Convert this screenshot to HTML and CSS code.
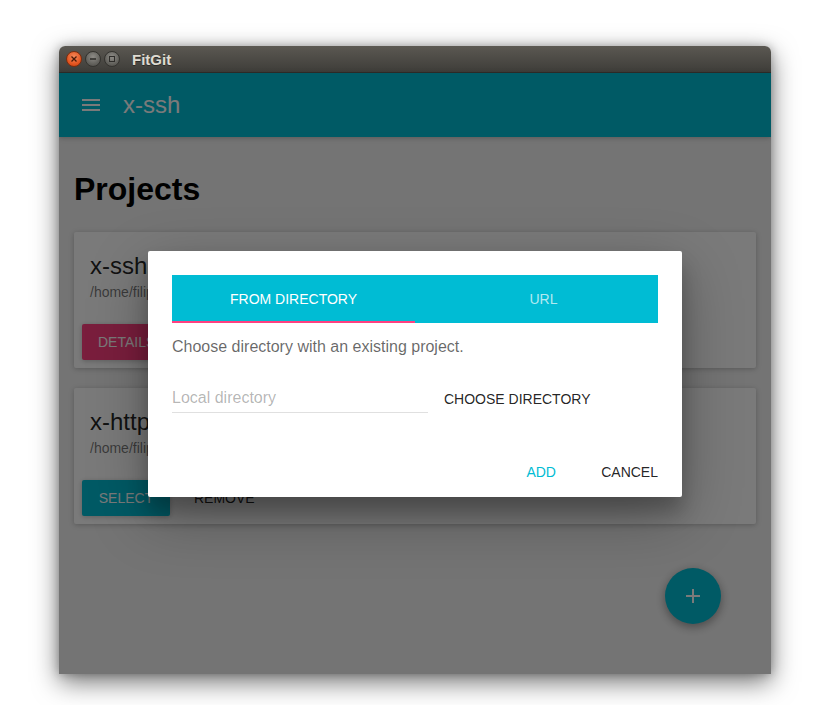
FILE: index.html
```html
<!DOCTYPE html>
<html>
<head>
<meta charset="utf-8">
<title>FitGit</title>
<link rel="stylesheet" href="styles.css">
</head>
<body>
<div class="window">
  <div class="titlebar">
    <div class="wbtns">
      <span class="wbtn close"><svg width="8" height="8" viewBox="0 0 8 8"><path d="M1.5 1.5L6.5 6.5M6.5 1.5L1.5 6.5" stroke="#4a1a08" stroke-width="1.3"/></svg></span>
      <span class="wbtn"><svg width="8" height="8" viewBox="0 0 8 8"><path d="M1 4H7" stroke="#2e2d2a" stroke-width="1.3"/></svg></span>
      <span class="wbtn"><svg width="8" height="8" viewBox="0 0 8 8"><rect x="1.5" y="1.5" width="5" height="5" fill="none" stroke="#2e2d2a" stroke-width="1"/></svg></span>
    </div>
    <span class="wtitle">FitGit</span>
  </div>
  <div class="app">
    <header class="appbar">
      <span class="iconbtn">
        <svg width="24" height="24" viewBox="0 0 24 24"><path d="M3 18h18v-2H3v2zm0-5h18v-2H3v2zm0-7v2h18V6H3z" fill="#fff"/></svg>
      </span>
      <h2 class="apptitle">x-ssh</h2>
    </header>
    <main class="content">
      <h1 class="heading">Projects</h1>
      <div class="cards">
        <section class="card">
          <div class="cardtitle">
            <span class="ctitle">x-ssh</span>
            <span class="csub">/home/filip/projects/x-ssh</span>
          </div>
          <div class="cardactions">
            <span class="rbtn pink">DETAILS</span>
          </div>
        </section>
        <section class="card">
          <div class="cardtitle">
            <span class="ctitle">x-http</span>
            <span class="csub">/home/filip/projects/x-http</span>
          </div>
          <div class="cardactions">
            <span class="rbtn cyan">SELECT</span>
            <span class="fbtn">REMOVE</span>
          </div>
        </section>
      </div>
    </main>
    <span class="fab"><svg width="24" height="24" viewBox="0 0 24 24"><path d="M19 13h-6v6h-2v-6H5v-2h6V5h2v6h6v2z" fill="#fff"/></svg></span>
    <div class="overlay">
      <div class="dialog">
        <div class="dbody">
          <div class="tabs">
            <div class="tab active"><span>FROM DIRECTORY</span></div>
            <div class="tab second"><span>URL</span></div>
            <div class="ink"></div>
          </div>
          <p class="desc">Choose directory with an existing project.</p>
          <div class="fieldrow">
            <div class="textfield">
              <span class="hint">Local directory</span>
            </div>
            <span class="fbtn dark choose">CHOOSE DIRECTORY</span>
          </div>
        </div>
        <div class="dactions">
          <span class="fbtn accent">ADD</span>
          <span class="fbtn dark">CANCEL</span>
        </div>
      </div>
    </div>
  </div>
</div>
</body>
</html>
```
FILE: styles.css
```css
* { box-sizing: border-box; }
html, body { margin: 0; }
body {
  background: #ffffff;
  padding: 46px 0 0 59px;
  font-family: "Liberation Sans", Arial, sans-serif;
  height: 705px;
  overflow: hidden;
}
.window {
  width: 712px;
  height: 628px;
  display: flex;
  flex-direction: column;
  border-radius: 6px 6px 0 0;
  box-shadow: 0 8px 26px rgba(0,0,0,0.55), 0 0 10px rgba(0,0,0,0.25);
  overflow: hidden;
}
.titlebar {
  height: 27px;
  flex: none;
  display: flex;
  align-items: center;
  padding-left: 7px;
  background: linear-gradient(#5b5852, #3e3d39);
  border-bottom: 1px solid #2f2e2b;
}
.wbtns { display: flex; gap: 3px; }
.wbtn {
  width: 16px;
  height: 16px;
  border-radius: 50%;
  display: flex;
  align-items: center;
  justify-content: center;
  background: radial-gradient(circle at 50% 35%, #8e8c87, #5d5c57 70%, #4a4945);
  border: 1px solid #34332f;
}
.wbtn.close {
  background: radial-gradient(circle at 50% 35%, #f58a5c, #e2531e 65%, #c23f10);
  border-color: #7a2e10;
}
.wtitle {
  margin-left: 12px;
  color: #dfdbd2;
  font-family: "Liberation Sans", Arial, sans-serif;
  font-weight: bold;
  font-size: 15px;
  text-shadow: 0 1px 0 #2c2b28;
}
.app {
  flex: 1;
  position: relative;
  display: flex;
  flex-direction: column;
  min-height: 0;
}
.appbar {
  height: 64px;
  flex: none;
  background: #00bcd4;
  display: flex;
  align-items: center;
  padding-left: 8px;
  box-shadow: 0 1px 6px rgba(0,0,0,0.12), 0 1px 4px rgba(0,0,0,0.12);
  position: relative;
  z-index: 1;
}
.iconbtn {
  width: 48px;
  height: 48px;
  padding: 12px;
  display: block;
}
.iconbtn svg { display: block; }
.apptitle {
  margin: 0 0 0 8px;
  font-weight: 400;
  font-size: 24px;
  line-height: 64px;
  color: #ffffff;
}
.content {
  flex: 1;
  background: #f2f2f2;
  padding: 33px 15px 0;
}
.heading {
  margin: 0 0 24px;
  font-size: 32px;
  line-height: 38px;
  font-weight: 700;
  color: #000;
}
.cards {
  display: flex;
  flex-direction: column;
  gap: 20px;
}
.card {
  background: #fff;
  border-radius: 2px;
  box-shadow: 0 1px 6px rgba(0,0,0,0.12), 0 1px 4px rgba(0,0,0,0.12);
}
.cardtitle {
  padding: 16px;
  display: flex;
  flex-direction: column;
}
.ctitle {
  font-size: 24px;
  line-height: 36px;
  color: rgba(0,0,0,0.87);
}
.csub {
  font-size: 14px;
  line-height: 16px;
  color: rgba(0,0,0,0.54);
}
.cardactions {
  padding: 8px;
  display: flex;
  gap: 8px;
}
.rbtn {
  min-width: 88px;
  height: 36px;
  padding: 0 16px;
  border-radius: 2px;
  display: flex;
  align-items: center;
  justify-content: center;
  font-size: 14px;
  font-weight: 400;
  color: #fff;
  box-shadow: 0 1px 6px rgba(0,0,0,0.12), 0 1px 4px rgba(0,0,0,0.12);
}
.rbtn.pink { background: #ff4081; }
.rbtn.cyan { background: #00bcd4; }
.fbtn {
  min-width: 88px;
  height: 36px;
  padding: 0 16px;
  display: flex;
  align-items: center;
  justify-content: center;
  font-size: 14px;
  font-weight: 400;
  color: rgba(0,0,0,0.87);
}
.fbtn.dark { color: rgba(0,0,0,0.87); }
.fbtn.accent { color: #00bcd4; }
.fbtn.choose { align-self: flex-end; margin-bottom: 3px; }
.fab {
  position: absolute;
  right: 50px;
  bottom: 50px;
  width: 56px;
  height: 56px;
  border-radius: 50%;
  background: #00bcd4;
  display: flex;
  align-items: center;
  justify-content: center;
  box-shadow: 0 3px 10px rgba(0,0,0,0.16), 0 3px 10px rgba(0,0,0,0.23);
}
.overlay {
  position: absolute;
  inset: 0;
  z-index: 5;
  background: rgba(0,0,0,0.52);
  display: flex;
  justify-content: center;
  align-items: flex-start;
  padding-top: 178px;
}
.dialog {
  width: 534px;
  background: #fff;
  border-radius: 2px;
  box-shadow: 0 19px 60px rgba(0,0,0,0.3), 0 15px 20px rgba(0,0,0,0.22);
}
.dbody {
  padding: 24px 24px 25px;
}
.tabs {
  position: relative;
  display: grid;
  grid-template-columns: 1fr 1fr;
  background: #00bcd4;
  height: 48px;
}
.tab {
  display: flex;
  align-items: center;
  justify-content: center;
  font-size: 14px;
  font-weight: 400;
  color: rgba(255,255,255,0.7);
  padding-bottom: 1px;
}
.tab.second span { margin-left: 14px; }
.tab.active { color: #fff; }
.ink {
  position: absolute;
  left: 0;
  bottom: 0;
  width: 50%;
  height: 2px;
  background: #ff4081;
}
.desc {
  margin: 16px 0 17px;
  font-size: 16px;
  line-height: 16px;
  color: rgba(0,0,0,0.6);
}
.fieldrow {
  display: flex;
  align-items: center;
}
.textfield {
  width: 256px;
  height: 41px;
  display: flex;
  align-items: flex-end;
  padding-bottom: 2px;
  border-bottom: 1px solid #e0e0e0;
  margin-bottom: 7px;
}
.hint {
  font-size: 16px;
  line-height: 24px;
  color: rgba(0,0,0,0.3);
}
.dactions {
  padding: 9px 8px 7px;
  display: flex;
  justify-content: flex-end;
}
```
